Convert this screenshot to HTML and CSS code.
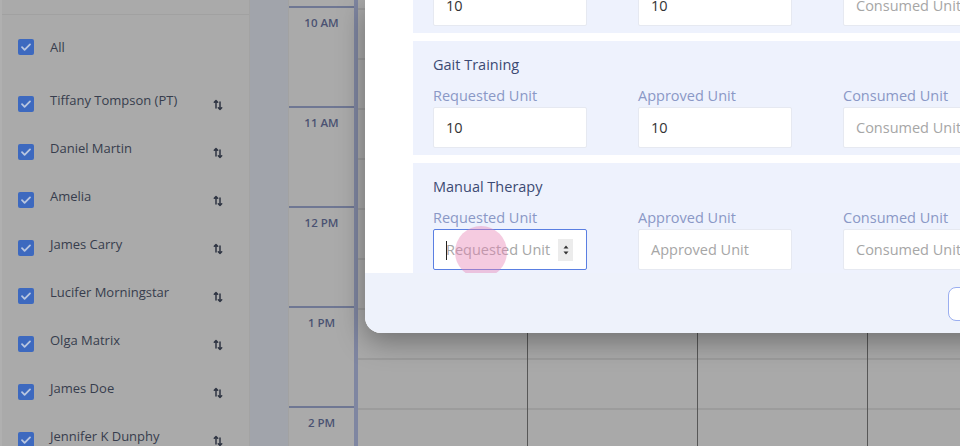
FILE: index.html
```html
<!DOCTYPE html>
<html>
<head>
<meta charset="utf-8">
<link rel="stylesheet" href="styles.css">
</head>
<body>
<div class="app">
  <aside class="sidebar">
    <div class="side-head"></div>
    <ul class="people">
      <li class="person all"><span class="cb"><svg viewBox="0 0 16 16"><path d="M4 8.2l2.6 2.6L12 5.4" /></svg></span><span class="name">All</span></li>
      <li class="person"><span class="cb"><svg viewBox="0 0 16 16"><path d="M4 8.2l2.6 2.6L12 5.4" /></svg></span><span class="name">Tiffany Tompson (PT)</span><svg class="sort" viewBox="0 0 10 12"><path d="M3 9V1.5M1.3 3.2L3 1.5l1.7 1.7M7 3v7.5M5.3 8.8L7 10.5l1.7-1.7"/></svg></li>
      <li class="person"><span class="cb"><svg viewBox="0 0 16 16"><path d="M4 8.2l2.6 2.6L12 5.4" /></svg></span><span class="name">Daniel Martin</span><svg class="sort" viewBox="0 0 10 12"><path d="M3 9V1.5M1.3 3.2L3 1.5l1.7 1.7M7 3v7.5M5.3 8.8L7 10.5l1.7-1.7"/></svg></li>
      <li class="person"><span class="cb"><svg viewBox="0 0 16 16"><path d="M4 8.2l2.6 2.6L12 5.4" /></svg></span><span class="name">Amelia</span><svg class="sort" viewBox="0 0 10 12"><path d="M3 9V1.5M1.3 3.2L3 1.5l1.7 1.7M7 3v7.5M5.3 8.8L7 10.5l1.7-1.7"/></svg></li>
      <li class="person"><span class="cb"><svg viewBox="0 0 16 16"><path d="M4 8.2l2.6 2.6L12 5.4" /></svg></span><span class="name">James Carry</span><svg class="sort" viewBox="0 0 10 12"><path d="M3 9V1.5M1.3 3.2L3 1.5l1.7 1.7M7 3v7.5M5.3 8.8L7 10.5l1.7-1.7"/></svg></li>
      <li class="person"><span class="cb"><svg viewBox="0 0 16 16"><path d="M4 8.2l2.6 2.6L12 5.4" /></svg></span><span class="name">Lucifer Morningstar</span><svg class="sort" viewBox="0 0 10 12"><path d="M3 9V1.5M1.3 3.2L3 1.5l1.7 1.7M7 3v7.5M5.3 8.8L7 10.5l1.7-1.7"/></svg></li>
      <li class="person"><span class="cb"><svg viewBox="0 0 16 16"><path d="M4 8.2l2.6 2.6L12 5.4" /></svg></span><span class="name">Olga Matrix</span><svg class="sort" viewBox="0 0 10 12"><path d="M3 9V1.5M1.3 3.2L3 1.5l1.7 1.7M7 3v7.5M5.3 8.8L7 10.5l1.7-1.7"/></svg></li>
      <li class="person"><span class="cb"><svg viewBox="0 0 16 16"><path d="M4 8.2l2.6 2.6L12 5.4" /></svg></span><span class="name">James Doe</span><svg class="sort" viewBox="0 0 10 12"><path d="M3 9V1.5M1.3 3.2L3 1.5l1.7 1.7M7 3v7.5M5.3 8.8L7 10.5l1.7-1.7"/></svg></li>
      <li class="person"><span class="cb"><svg viewBox="0 0 16 16"><path d="M4 8.2l2.6 2.6L12 5.4" /></svg></span><span class="name">Jennifer K Dunphy</span><svg class="sort" viewBox="0 0 10 12"><path d="M3 9V1.5M1.3 3.2L3 1.5l1.7 1.7M7 3v7.5M5.3 8.8L7 10.5l1.7-1.7"/></svg></li>
    </ul>
  </aside>
  <div class="gutter"></div>
  <div class="timecol">
    <div class="slot first"></div>
    <div class="slot"><span>10 AM</span></div>
    <div class="slot"><span>11 AM</span></div>
    <div class="slot"><span>12 PM</span></div>
    <div class="slot"><span>1 PM</span></div>
    <div class="slot"><span>2 PM</span></div>
  </div>
  <div class="grid">
    <div class="col"></div>
    <div class="col"></div>
    <div class="col"></div>
    <div class="col"></div>
  </div>
</div>

<div class="modal">
  <div class="modal-body">
    <div class="sections">
      <section class="svc">
        <h3 class="svc-title">Therapeutic Exercise</h3>
        <div class="fields">
          <label class="field"><span class="lbl">Requested Unit</span><span class="inp">10</span></label>
          <label class="field"><span class="lbl">Approved Unit</span><span class="inp">10</span></label>
          <label class="field"><span class="lbl">Consumed Unit</span><span class="inp ph">Consumed Unit</span></label>
        </div>
      </section>
      <section class="svc">
        <h3 class="svc-title">Gait Training</h3>
        <div class="fields">
          <label class="field"><span class="lbl">Requested Unit</span><span class="inp">10</span></label>
          <label class="field"><span class="lbl">Approved Unit</span><span class="inp">10</span></label>
          <label class="field"><span class="lbl">Consumed Unit</span><span class="inp ph">Consumed Unit</span></label>
        </div>
      </section>
      <section class="svc">
        <h3 class="svc-title">Manual Therapy</h3>
        <div class="fields">
          <label class="field"><span class="lbl">Requested Unit</span><span class="inp ph focus"><span class="caret"></span>Requested Unit<span class="spin"><svg viewBox="0 0 8 14"><path d="M4 2.5L6.5 5.5H1.5z M4 11.5L1.5 8.5H6.5z"/></svg></span><span class="click"></span></span></label>
          <label class="field"><span class="lbl">Approved Unit</span><span class="inp ph">Approved Unit</span></label>
          <label class="field"><span class="lbl">Consumed Unit</span><span class="inp ph">Consumed Unit</span></label>
        </div>
      </section>
    </div>
  </div>
  <div class="modal-foot">
    <button class="btn">Cancel</button>
  </div>
</div>
</body>
</html>
```

FILE: styles.css
```css
* { box-sizing: border-box; }
html, body { margin: 0; padding: 0; }
body {
  width: 960px;
  height: 446px;
  overflow: hidden;
  position: relative;
  font-family: "Open Sans", "Noto Sans", sans-serif;
  background: #b0b0b0;
}
.app {
  display: flex;
  height: 446px;
  padding-left: 2px;
}
.sidebar {
  flex: none;
  width: 248px;
  background: #aaaaaa;
  border-right: 1px solid #a3a3a3;
  overflow: hidden;
}
.side-head {
  height: 15px;
  border-bottom: 1px solid #a1a1a1;
}
.people {
  list-style: none;
  margin: 0;
  padding: 16px 0 0 16px;
}
.person {
  display: flex;
  align-items: center;
  height: 48px;
  position: relative;
}
.person.all { height: 32px; margin-bottom: 14px; }
.cb {
  width: 16px;
  height: 16px;
  border-radius: 2px;
  background: #3d69bf;
  display: flex;
  margin-top: 5px;
  flex: none;
}
.person.all .cb { margin-top: 0; }
.cb svg { width: 16px; height: 16px; fill: none; stroke: #b9c6e0; stroke-width: 1.8; stroke-linecap: round; stroke-linejoin: round; }
.name {
  margin-left: 16px;
  font-size: 13px;
  font-weight: 500;
  color: #373d4d;
  flex: 1;
  margin-top: -3px;
  white-space: nowrap;
}
.person.all .name { margin-top: 0; }
.sort {
  flex: none;
  width: 10px;
  height: 12px;
  margin-right: 26px;
  margin-top: 7px;
  fill: none;
  stroke: #2f3543;
  stroke-width: 1.5;
  stroke-linecap: round;
  stroke-linejoin: round;
}
.gutter {
  flex: none;
  width: 38px;
  background: #a1a4ab;
}
.timecol {
  flex: none;
  width: 70px;
  background: #aaaaaa;
  border-left: 1px solid #a2a2a2;
  border-right: 4px solid #7f86a1;
}
.slot {
  height: 100px;
  border-bottom: 2px solid #6f7793;
  text-align: center;
  padding-top: 7px;
  font-size: 11.5px;
  font-weight: 600;
  color: #4a5272;
}
.slot.first { height: 8px; padding: 0; }
.grid {
  flex: none;
  width: 602px;
  display: flex;
  background-color: #a9a9a9;
  background-image: repeating-linear-gradient(to bottom, transparent 0, transparent 8px, #9c9c9c 8px, #9c9c9c 10px, transparent 10px, transparent 50px);
}
.col {
  width: 170px;
  flex: none;
  border-right: 1px solid #575757;
}

/* modal */
.modal {
  position: absolute;
  left: 365px;
  top: 0;
  width: 720px;
  height: 333px;
  background: #ffffff;
  border-radius: 0 0 0 16px;
  box-shadow: 0 8px 28px rgba(0, 0, 0, 0.35);
  overflow: hidden;
  display: flex;
  flex-direction: column;
}
.modal-body {
  height: 273px;
  flex: none;
  overflow: hidden;
  padding-left: 48px;
}
.sections {
  margin-top: -81px;
  display: flex;
  flex-direction: column;
  gap: 8px;
}
.svc {
  background: #eef2fd;
  padding: 14px 20px 7px;
  height: 114px;
  flex: none;
}
.svc-title {
  margin: 0;
  font-size: 14.5px;
  line-height: 20px;
  font-weight: 500;
  color: #3c4a73;
}
.fields {
  display: grid;
  grid-template-columns: repeat(3, 154px);
  column-gap: 51px;
  margin-top: 11px;
}
.field { display: flex; flex-direction: column; }
.lbl {
  font-size: 14.5px;
  line-height: 20px;
  color: #8a98c6;
  margin-bottom: 1px;
  white-space: nowrap;
}
.inp {
  height: 41px;
  background: #ffffff;
  border: 1px solid #e6e9f1;
  border-radius: 2px;
  display: flex;
  align-items: center;
  padding-left: 12px;
  font-size: 14.5px;
  color: #333333;
  position: relative;
  white-space: nowrap;
}
.inp.ph { color: #a6a6a6; }
.inp.focus {
  border: 1px solid #5a7fe2;
}
.caret {
  position: absolute;
  left: 12px;
  top: 11px;
  width: 1px;
  height: 19px;
  background: #222;
}
.spin {
  position: absolute;
  right: 13px;
  top: 9px;
  width: 15px;
  height: 22px;
  background: #ececec;
  display: flex;
  align-items: center;
  justify-content: center;
}
.spin svg { width: 8px; height: 14px; fill: #333; }
.click {
  position: absolute;
  left: 21px;
  top: -4px;
  width: 52px;
  height: 52px;
  border-radius: 50%;
  background: rgba(232, 130, 180, 0.42);
}
.modal-foot {
  flex: 1;
  background: #eef2fb;
  padding: 14px 0 0 583px;
}
.btn {
  height: 34px;
  width: 100px;
  border: 1.5px solid #9aaef0;
  border-radius: 8px;
  background: #ffffff;
  font-family: inherit;
  font-size: 14px;
  color: #5a73d8;
}
```
